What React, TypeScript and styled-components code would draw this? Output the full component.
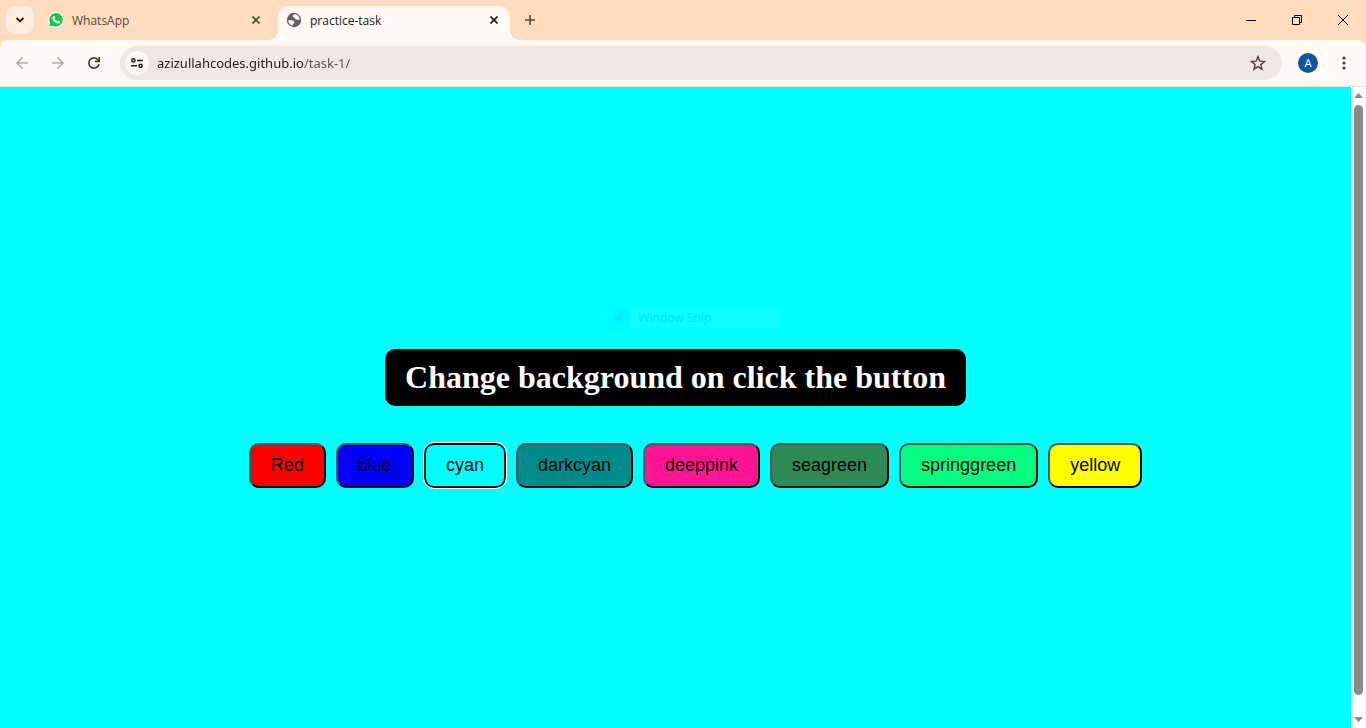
import React, { useState } from "react";
import styled, { createGlobalStyle, css } from "styled-components";

const Global = createGlobalStyle`
  * { box-sizing: border-box; }
  body { margin: 0; }
  button { cursor: pointer; }
`;

const uiFont = `"Open Sans", "Noto Sans", sans-serif`;
const frame = "#ffdcbd";
const surface = "#fff8f5";

const Window = styled.div`
  display: flex;
  flex-direction: column;
  min-height: 100vh;
  background: ${frame};
  font-family: ${uiFont};
`;

const TabStrip = styled.header`
  display: flex;
  align-items: flex-end;
  height: 40px;
  padding-left: 6px;
`;

const PlainButton = styled.button`
  display: flex;
  align-items: center;
  justify-content: center;
  flex: none;
  padding: 0;
  border: 0;
  background: transparent;
  color: inherit;
`;

const TabSearch = styled(PlainButton)`
  width: 28px;
  height: 28px;
  margin-bottom: 6px;
  border-radius: 10px;
  background: #ffeee0;
`;

const flare = css`
  content: "";
  position: absolute;
  bottom: 0;
  width: 10px;
  height: 10px;
`;

const Tab = styled.div<{ $active?: boolean }>`
  position: relative;
  display: flex;
  align-items: center;
  width: ${(p) => (p.$active ? 232 : 238)}px;
  height: 34px;
  margin-left: ${(p) => (p.$active ? 0 : 6)}px;
  padding: 0 ${(p) => (p.$active ? 8 : 14)}px 6px 8px;
  border-radius: 10px 10px 0 0;
  color: ${(p) => (p.$active ? "#201a17" : "#5c4630")};
  ${(p) =>
    p.$active &&
    css`
      background: ${surface};
      &::before {
        ${flare}
        left: -10px;
        background: radial-gradient(circle at 0 0, ${frame} 10px, ${surface} 10px);
      }
      &::after {
        ${flare}
        right: -10px;
        background: radial-gradient(circle at 100% 0, ${frame} 10px, ${surface} 10px);
      }
    `}
`;

const TabTitle = styled.span`
  flex: 1;
  margin-left: 8px;
  font-size: 12px;
  line-height: 16px;
  padding-top: 2px;
  white-space: nowrap;
`;

const TabClose = styled(PlainButton)`
  width: 16px;
  height: 16px;
`;

const NewTab = styled(PlainButton)`
  width: 28px;
  height: 28px;
  margin: 0 0 6px 6px;
  color: #5c4630;
`;

const WindowButtons = styled.div`
  display: flex;
  height: 40px;
  margin-left: auto;
`;

const WindowButton = styled(PlainButton)`
  width: 46px;
  height: 40px;
  color: #000;
`;

const Toolbar = styled.nav`
  display: flex;
  align-items: center;
  height: 47px;
  padding: 0 8px 0 4px;
  border-bottom: 1px solid #eddfd2;
  border-radius: 8px 8px 0 0;
  background: ${surface};
`;

const ToolButton = styled(PlainButton)<{ $dim?: boolean }>`
  width: 36px;
  height: 34px;
  color: ${(p) => (p.$dim ? "#b5aca6" : "#4d3b2a")};
`;

const Omnibox = styled.div`
  display: flex;
  flex: 1;
  align-items: center;
  height: 34px;
  margin-left: 8px;
  padding: 0 6px 0 5px;
  border-radius: 17px;
  background: #efe7e3;
`;

const SiteInfo = styled(PlainButton)`
  width: 24px;
  height: 24px;
  border-radius: 50%;
  background: ${surface};
`;

const Address = styled.input`
  flex: 1;
  min-width: 0;
  height: 24px;
  margin-left: 8px;
  padding: 0;
  border: 0;
  outline: 0;
  background: linear-gradient(90deg, #201a17 147px, #5c514b 147px);
  background-clip: text;
  color: transparent;
  font-family: "Noto Sans", sans-serif;
  font-size: 13px;
`;

const Avatar = styled(PlainButton)`
  width: 20px;
  height: 20px;
  margin: 0 12px 0 16px;
  border-radius: 50%;
  background: #0b57a0;
  color: #fff;
  font-family: Roboto, sans-serif;
  font-size: 11px;
`;

const MenuButton = styled(ToolButton)`
  width: 28px;
`;

const Viewport = styled.div`
  display: flex;
  flex: 1;
`;

const Page = styled.main<{ $color: string }>`
  position: relative;
  display: flex;
  flex: 1;
  flex-direction: column;
  align-items: center;
  justify-content: center;
  gap: 37px;
  padding-top: 22px;
  background: ${(p) => p.$color};
`;

const Heading = styled.h1`
  margin: 0;
  padding: 10px 20px;
  border-radius: 10px;
  background: #000;
  color: #fff;
  font-family: "Liberation Serif", serif;
  font-size: 32px;
  line-height: 37px;
`;

const Swatches = styled.div`
  display: flex;
  gap: 10px;
  padding-left: 40px;
`;

const Swatch = styled.button<{ $color: string; $selected: boolean }>`
  height: 45px;
  padding: 10px 20px;
  border: 2px outset #000;
  border-radius: 10px;
  background: ${(p) => p.$color};
  color: #000;
  font-family: "Liberation Sans", sans-serif;
  font-size: 18px;
  line-height: 21px;
  ${(p) =>
    p.$selected &&
    css`
      border: 2px solid #101010;
      outline: 1px solid #fff;
    `}
`;

const SnipHint = styled.div`
  position: absolute;
  top: 220px;
  left: calc(50% - 69px);
  display: flex;
  align-items: center;
  width: 173px;
  height: 22px;
  background: #0cfcff;
  color: #00e8ec;
  font-size: 12px;
  line-height: 16px;
`;

const SnipMark = styled.span`
  display: flex;
  align-items: center;
  justify-content: center;
  width: 22px;
  height: 22px;
  margin-right: 10px;
  background: #00f9ff;
`;

const ScrollTrack = styled.div`
  display: flex;
  flex-direction: column;
  align-items: center;
  width: 15px;
  padding: 6px 0;
  background: #fcfcfc;
`;

const ScrollThumb = styled.div`
  flex: 1;
  width: 9px;
  margin: 7px 0 22px;
  border-radius: 5px;
  background: #8b8b8b;
`;

const Cross = () => (
  <svg width="8" height="8" viewBox="0 0 8 8" stroke="currentColor" strokeWidth="1.6">
    <path d="M.5 .5l7 7M7.500 .5l-7 7" />
  </svg>
);

const GlobeIcon = () => (
  <svg width="16" height="16" viewBox="0 0 16 16">
    <circle cx="8" cy="8" r="7.200" fill="#5f6368" />
    <path
      d="M9 2.300c-1.600 0-2.400.9-2.200 2 .3 1.400 1.700.9 2 1.900.3 1.100 1.300 1.500 2.200 1.300 1-.2 1.600.3 2.700.2C13.700 4.700 11.700 2.600 9 2.300z"
      fill="#fff8f5"
    />
    <path
      d="M2.300 8.200h3.500c1.600 0 2.600.9 2.600 2.200 0 1-.8 1.300-1.600 1.300v1.900C4.200 13.100 2.300 11 2.300 8.200z"
      fill="#fff8f5"
    />
  </svg>
);

const WhatsAppIcon = () => (
  <svg width="16" height="16" viewBox="0 0 16 16">
    <path d="M0 16l1-4.200A7.800 7.800 0 1 1 4.400 15z" fill="#fff" />
    <path d="M1.400 14.600l.9-3.300A6.700 6.700 0 1 1 4.900 13.700z" fill="#10c64b" />
    <path
      d="M5.400 4.100c.4-.3.9-.3 1.100.1l.6 1.400c.1.3 0 .5-.6 1.200.6 1.200 1.500 2 2.800 2.600.7-.9.9-1 1.200-.8l1.300.7c.4.2.4.5.2 1-.4.9-1.400 1.400-2.400 1.200C7.200 11 5.300 9.200 4.600 7.300 4.200 6 4.600 4.700 5.400 4.100z"
      fill="#fff"
    />
  </svg>
);

const colors = [
  { label: "Red", value: "red" },
  { label: "blue", value: "blue" },
  { label: "cyan", value: "cyan" },
  { label: "darkcyan", value: "darkcyan" },
  { label: "deeppink", value: "deeppink" },
  { label: "seagreen", value: "seagreen" },
  { label: "springgreen", value: "springgreen" },
  { label: "yellow", value: "yellow" },
];

export default function App() {
  const [color, setColor] = useState("cyan");
  const [url, setUrl] = useState("azizullahcodes.github.io/task-1/");

  return (
    <Window>
      <Global />
      <TabStrip>
        <TabSearch aria-label="Search tabs">
          <svg width="8" height="6" viewBox="0 0 8 6" fill="none" stroke="#201a17" strokeWidth="1.800">
            <path d="M.6 1L4 4.400 7.400 1" />
          </svg>
        </TabSearch>
        <Tab>
          <WhatsAppIcon />
          <TabTitle>WhatsApp</TabTitle>
          <TabClose aria-label="Close WhatsApp">
            <Cross />
          </TabClose>
        </Tab>
        <Tab $active>
          <GlobeIcon />
          <TabTitle>practice-task</TabTitle>
          <TabClose aria-label="Close practice-task">
            <Cross />
          </TabClose>
        </Tab>
        <NewTab aria-label="New tab">
          <svg width="10" height="10" viewBox="0 0 10 10" stroke="currentColor" strokeWidth="1.600">
            <path d="M5 0v10M0 5h10" />
          </svg>
        </NewTab>
        <WindowButtons>
          <WindowButton aria-label="Minimize">
            <svg width="10" height="10" stroke="currentColor">
              <path d="M0 5.500h10" />
            </svg>
          </WindowButton>
          <WindowButton aria-label="Restore">
            <svg width="10" height="10" fill="none" stroke="currentColor">
              <path d="M.5 2.500h7v7h-7zM2.500 2.500v-2h7v7h-2" />
            </svg>
          </WindowButton>
          <WindowButton aria-label="Close">
            <svg width="10" height="10" stroke="currentColor">
              <path d="M0 0l10 10M10 0L0 10" />
            </svg>
          </WindowButton>
        </WindowButtons>
      </TabStrip>

      <Toolbar>
        <ToolButton $dim aria-label="Back">
          <svg width="12" height="12" fill="none" stroke="currentColor" strokeWidth="1.600">
            <path d="M12 6H1M6.500 .5L1 6l5.500 5.500" />
          </svg>
        </ToolButton>
        <ToolButton $dim aria-label="Forward">
          <svg width="12" height="12" fill="none" stroke="currentColor" strokeWidth="1.600">
            <path d="M0 6h11M5.500 .5L11 6l-5.500 5.500" />
          </svg>
        </ToolButton>
        <ToolButton aria-label="Reload">
          <svg width="12" height="12" fill="none" stroke="currentColor" strokeWidth="1.600">
            <path d="M11 7A5.100 5.100 0 1 1 9.700 2.500L11.200 4M11.200 0v4.400H6.800" />
          </svg>
        </ToolButton>
        <Omnibox>
          <SiteInfo aria-label="View site information">
            <svg width="12" height="10" fill="none" stroke="#201a17" strokeWidth="1.500">
              <circle cx="2.400" cy="2.400" r="1.600" />
              <path d="M6 2.400H12M0 7.800h6" />
              <circle cx="9.600" cy="7.800" r="1.600" />
            </svg>
          </SiteInfo>
          <Address
            aria-label="Address"
            value={url}
            spellCheck={false}
            onChange={(e) => setUrl(e.target.value)}
          />
          <ToolButton aria-label="Bookmark this tab">
            <svg width="16" height="16" fill="none" stroke="#51443c" strokeWidth="1.400">
              <path d="M8 1.700l1.800 4.400 4.700.4-3.600 3.100 1.100 4.600L8 11.700l-4 2.500 1.100-4.600L1.500 6.500l4.700-.4z" />
            </svg>
          </ToolButton>
        </Omnibox>
        <Avatar aria-label="Profile A">A</Avatar>
        <MenuButton aria-label="Menu">
          <svg width="4" height="14" fill="currentColor">
            <circle cx="2" cy="2" r="1.600" />
            <circle cx="2" cy="7" r="1.600" />
            <circle cx="2" cy="12" r="1.600" />
          </svg>
        </MenuButton>
      </Toolbar>

      <Viewport>
        <Page $color={color}>
          <SnipHint>
            <SnipMark>
              <svg width="6" height="6" fill="#00e8ec">
                <circle cx="3" cy="3" r="3" />
              </svg>
            </SnipMark>
            Window Snip
          </SnipHint>
          <Heading>Change background on click the button</Heading>
          <Swatches>
            {colors.map((c) => (
              <Swatch
                key={c.value}
                $color={c.value}
                $selected={c.value === color}
                onClick={() => setColor(c.value)}
              >
                {c.label}
              </Swatch>
            ))}
          </Swatches>
        </Page>
        <ScrollTrack aria-hidden="true">
          <svg width="9" height="5" fill="#8b8b8b">
            <path d="M0 5L4.500 0L9 5z" />
          </svg>
          <ScrollThumb />
          <svg width="9" height="5" fill="#8b8b8b">
            <path d="M0 0h9L4.500 5z" />
          </svg>
        </ScrollTrack>
      </Viewport>
    </Window>
  );
}
